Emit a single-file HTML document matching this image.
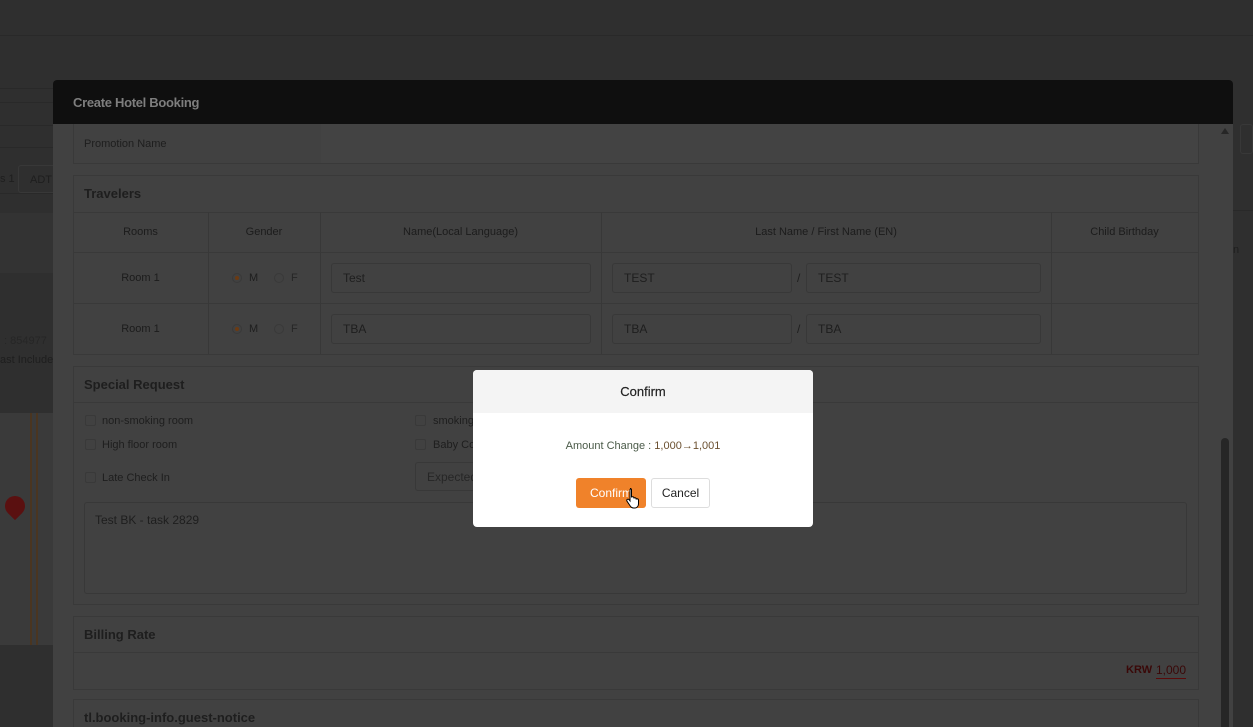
<!DOCTYPE html>
<html style="width:1253px;height:727px;overflow:hidden"><head><meta charset="utf-8"><style>
*{box-sizing:border-box;margin:0;padding:0}
body{width:1253px;height:727px;overflow:hidden;background:#2f2f2f;font-family:"Liberation Sans",sans-serif;position:relative;font-size:12px;color:#1c1c1c}
.a{position:absolute}
.hl{position:absolute;height:1px;background:#292929}
.vl{position:absolute;width:1px;background:#383838}
.panel{position:absolute;left:73px;width:1126px;border:1px solid #393939;background:#414141}
.inp{position:absolute;border:1px solid #383838;border-radius:3px;height:30px;padding-left:11px;line-height:28px;color:#1e1e1e;font-size:12px}
.c{position:absolute;text-align:center;font-size:12px}
.rad{position:absolute;width:10px;height:10px;border-radius:50%;border:1px solid #393939}
.rad.on::after{content:"";position:absolute;left:2px;top:2px;width:4px;height:4px;border-radius:50%;background:#6b3a12}
.cb{position:absolute;width:11px;height:11px;border:1px solid #393939;border-radius:2px}
.lbl{position:absolute;font-size:12px;color:#1e1e1e}
.b{font-weight:bold}
</style></head><body>
<div class="hl" style="top:35px;left:0;width:1253px"></div>
<div class="hl" style="top:88px;left:0;width:53px"></div>
<div class="hl" style="top:102px;left:0;width:53px"></div>
<div class="hl" style="top:125px;left:0;width:53px"></div>
<div class="hl" style="top:147px;left:0;width:53px"></div>
<div class="hl" style="top:193px;left:0;width:53px"></div>
<div class="a" style="left:0;top:173px;font-size:11px;color:#1e1e1e">s 1</div>
<div class="a" style="left:18px;top:165px;width:40px;height:28px;border:1px solid #383838;border-radius:3px;font-size:11px;padding:8px 0 0 11px;color:#1e1e1e">ADT</div>
<div class="a" style="left:0;top:213px;width:53px;height:60px;background:#333"></div>
<div class="a" style="left:4px;top:335px;font-size:11px;color:#262626">: 854977</div>
<div class="a" style="left:0;top:354px;font-size:11px;color:#1e1e1e">ast Include</div>
<div class="a" style="left:0;top:413px;width:53px;height:232px;background:#3a3a3a"></div>
<div class="a" style="left:30px;top:413px;width:2px;height:232px;background:#4a3520"></div>
<div class="a" style="left:36px;top:413px;width:2px;height:232px;background:#4a3520"></div>
<div class="a" style="left:5px;top:496px;width:20px;height:20px;border-radius:50% 50% 50% 0;transform:rotate(-45deg);background:#5a1010"></div>
<div class="a" style="left:1233px;top:210px;width:20px;height:1px;background:#292929"></div>
<div class="a" style="left:1233px;top:244px;font-size:11px;color:#1e1e1e">n</div>
<div class="a" style="left:1240px;top:124px;width:13px;height:30px;border:1px solid #383838;border-radius:3px"></div>

<div class="a" style="left:53px;top:80px;width:1180px;height:647px;background:#414141;border-radius:4px 4px 0 0;overflow:hidden">
 <div class="a" style="left:0;top:0;width:1180px;height:44px;background:#0f0f0f"></div>
 <div class="a b" style="left:20px;top:15px;font-size:13px;color:#7e7e7e;letter-spacing:-0.3px">Create Hotel Booking</div>
</div>
<div class="a" style="left:1221px;top:128px;width:0;height:0;border-left:4px solid transparent;border-right:4px solid transparent;border-bottom:6px solid #262626"></div>
<div class="a" style="left:1221px;top:438px;width:8px;height:289px;border-radius:4px 4px 0 0;background:#262626"></div>

<div class="panel" style="top:124px;height:40px;border-top:none"></div>
<div class="a" style="left:321px;top:124px;width:877px;height:39px;background:#434343"></div>
<div class="lbl" style="left:84px;top:138px;font-size:11px">Promotion Name</div>

<div class="panel" style="top:175px;height:180px"></div>
<div class="lbl b" style="left:84px;top:186px;font-size:13px">Travelers</div>
<div class="hl" style="top:212px;left:73px;width:1126px;background:#393939"></div>
<div class="hl" style="top:252px;left:73px;width:1126px;background:#393939"></div>
<div class="hl" style="top:303px;left:73px;width:1126px;background:#393939"></div>
<div class="vl" style="left:208px;top:212px;height:142px"></div>
<div class="vl" style="left:320px;top:212px;height:142px"></div>
<div class="vl" style="left:601px;top:212px;height:142px"></div>
<div class="vl" style="left:1051px;top:212px;height:142px"></div>
<div class="c" style="left:73px;width:135px;top:226px;font-size:11px">Rooms</div>
<div class="c" style="left:208px;width:112px;top:226px;font-size:11px">Gender</div>
<div class="c" style="left:320px;width:281px;top:226px;font-size:11px">Name(Local Language)</div>
<div class="c" style="left:601px;width:450px;top:226px;font-size:11px">Last Name / First Name (EN)</div>
<div class="c" style="left:1051px;width:147px;top:226px;font-size:11px">Child Birthday</div>

<div class="c" style="left:73px;width:135px;top:272px;font-size:11px">Room 1</div>
<div class="rad on" style="left:232px;top:273px"></div><div class="lbl" style="left:249px;top:272px;font-size:11px">M</div>
<div class="rad" style="left:274px;top:273px"></div><div class="lbl" style="left:291px;top:272px;font-size:11px;color:#262626">F</div>
<div class="inp" style="left:331px;top:263px;width:260px">Test</div>
<div class="inp" style="left:612px;top:263px;width:180px">TEST</div>
<div class="lbl" style="left:797px;top:271px">/</div>
<div class="inp" style="left:806px;top:263px;width:235px">TEST</div>

<div class="c" style="left:73px;width:135px;top:323px;font-size:11px">Room 1</div>
<div class="rad on" style="left:232px;top:324px"></div><div class="lbl" style="left:249px;top:323px;font-size:11px">M</div>
<div class="rad" style="left:274px;top:324px"></div><div class="lbl" style="left:291px;top:323px;font-size:11px;color:#262626">F</div>
<div class="inp" style="left:331px;top:314px;width:260px">TBA</div>
<div class="inp" style="left:612px;top:314px;width:180px">TBA</div>
<div class="lbl" style="left:797px;top:322px">/</div>
<div class="inp" style="left:806px;top:314px;width:235px">TBA</div>

<div class="panel" style="top:366px;height:239px"></div>
<div class="lbl b" style="left:84px;top:377px;font-size:13px">Special Request</div>
<div class="hl" style="top:402px;left:73px;width:1126px;background:#393939"></div>
<div class="cb" style="left:85px;top:415px"></div><div class="lbl" style="left:102px;top:415px;font-size:11px">non-smoking room</div>
<div class="cb" style="left:85px;top:439px"></div><div class="lbl" style="left:102px;top:439px;font-size:11px">High floor room</div>
<div class="cb" style="left:85px;top:472px"></div><div class="lbl" style="left:102px;top:472px;font-size:11px">Late Check In</div>
<div class="cb" style="left:415px;top:415px"></div><div class="lbl" style="left:433px;top:415px;font-size:11px">smoking</div>
<div class="cb" style="left:415px;top:439px"></div><div class="lbl" style="left:433px;top:439px;font-size:11px">Baby Co</div>
<div class="inp" style="left:415px;top:462px;width:70px;height:29px;color:#262626">Expected</div>
<div class="a" style="left:84px;top:502px;width:1103px;height:92px;border:1px solid #383838;border-radius:3px;padding:10px;font-size:12px;color:#1e1e1e">Test BK - task 2829</div>

<div class="panel" style="top:616px;height:74px"></div>
<div class="lbl b" style="left:84px;top:627px;font-size:13px">Billing Rate</div>
<div class="hl" style="top:652px;left:73px;width:1126px;background:#393939"></div>
<div class="lbl b" style="left:1126px;top:664px;font-size:11px;color:#3a0808">KRW</div>
<div class="lbl" style="left:1156px;top:663px;font-size:12px;color:#3a0808;border-bottom:1px solid #5a0a0a;padding-bottom:1px">1,000</div>

<div class="panel" style="top:699px;height:40px"></div>
<div class="lbl b" style="left:84px;top:710px;font-size:13px">tl.booking-info.guest-notice</div>

<div class="a" style="left:473px;top:370px;width:340px;height:157px;background:#fff;border-radius:4px;overflow:hidden">
 <div class="a" style="left:0;top:0;width:340px;height:43px;background:#f4f4f4"></div>
 <div class="a" style="left:0;top:14px;width:340px;text-align:center;font-size:13px;color:#222;-webkit-text-stroke:0.2px #222">Confirm</div>
 <div class="a" style="left:0;top:70px;width:340px;text-align:center;font-size:11px;color:#4a5a48">Amount Change : <span style="color:#6b5030">1,000→1,001</span></div>
 <div class="a" style="left:103px;top:108px;width:70px;height:30px;background:#f0822a;border-radius:3px;color:#fff;font-size:12px;text-align:center;line-height:30px">Confirm</div>
 <div class="a" style="left:178px;top:108px;width:59px;height:30px;border:1px solid #ddd;border-radius:3px;color:#222;font-size:12px;text-align:center;line-height:28px">Cancel</div>
 <svg class="a" style="left:153px;top:117px" width="16" height="22" viewBox="0 0 16 22"><path d="M4 1.5c.8 0 1.5.6 1.5 1.5v7l1-.3c.8 0 1.4.5 1.4 1.2l.9-.2c.8 0 1.4.5 1.4 1.3l.9-.2c.8 0 1.4.6 1.4 1.4V17c0 2.2-1.6 4-3.8 4H7.5c-1.3 0-2.3-.6-3-1.6L1 14.2c-.5-.7-.3-1.5.4-1.9.6-.3 1.3-.1 1.7.4l.9 1.2V3c0-.9.7-1.5.9-1.5z" fill="#fff" stroke="#000" stroke-width="1"/></svg>
</div>
</body></html>
